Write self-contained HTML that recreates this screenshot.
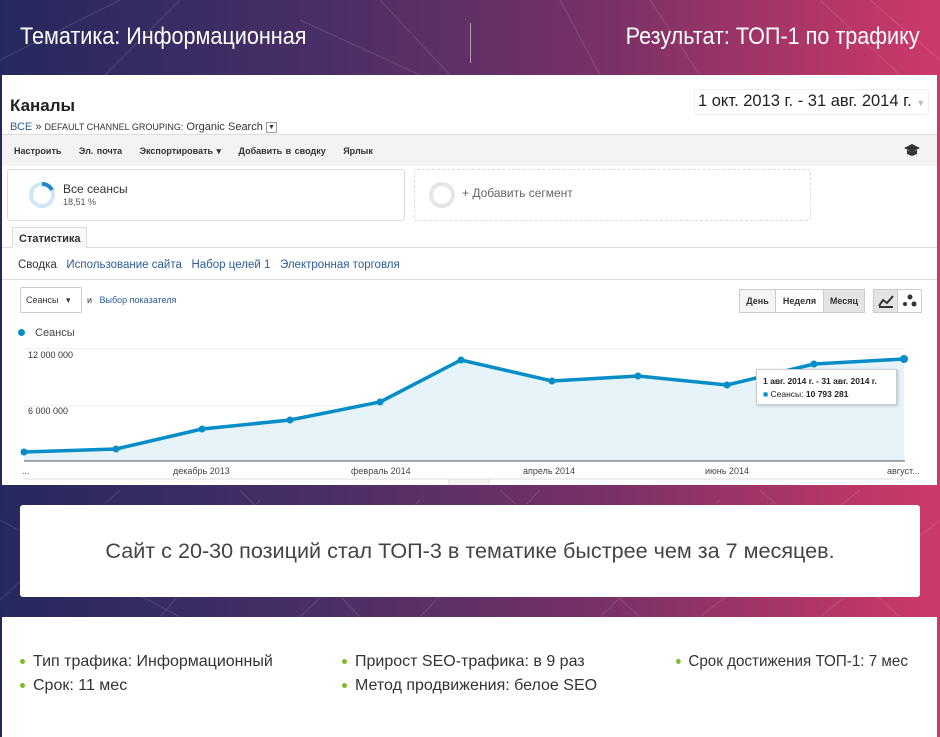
<!DOCTYPE html>
<html><head><meta charset="utf-8"><style>
*{margin:0;padding:0;box-sizing:border-box}
body{width:940px;height:737px;overflow:hidden;position:relative;font-family:"Liberation Sans",Arial,sans-serif;background:linear-gradient(90deg,#25285e 0%,#4a2f66 35%,#7a3166 65%,#b33668 88%,#cc3a6a 100%)}
.abs{position:absolute}
.hdr{color:#fff;font-size:24px;top:23px;transform:scaleX(0.9);white-space:nowrap}
.ss{left:2px;top:75px;width:935px;height:410px;background:#fff;overflow:hidden}
.t{position:absolute;white-space:nowrap}
.blue{color:#2a5d99}
.btn{border:1px solid #ccc;background:#f5f5f5;font-size:9px;font-weight:bold;color:#333;height:24px;line-height:22px;text-align:center}
.li{font-size:16px;color:#333;white-space:nowrap}
.li:before{content:"";display:inline-block;width:5px;height:5px;border-radius:50%;background:#7cb82f;margin-right:8px;vertical-align:middle}
</style></head><body>
<svg class="abs" style="left:0;top:0" width="940" height="737"><g stroke="#ffffff" stroke-opacity="0.13" stroke-width="1" fill="none">
<path d="M0 60 L120 0 M180 0 L60 120 M300 20 L420 75 M650 0 L700 75 M380 0 L450 75 M820 0 L900 75 M870 0 L940 60 M560 0 L600 75 M0 600 L120 490 M160 617 L260 500 M300 617 L420 500 M420 617 L540 490 M600 617 L720 500 M700 617 L860 490 M820 617 L940 520 M0 520 L180 617 M240 490 L360 617 M500 490 L640 617 M760 490 L900 617"/></g></svg>
<div class="abs hdr" style="left:20px;transform-origin:left center">Тематика: Информационная</div>
<div class="abs" style="left:470px;top:23px;width:1px;height:40px;background:rgba(255,255,255,.5)"></div>
<div class="abs hdr" style="right:20px;transform-origin:right center">Результат: ТОП-1 по трафику</div>

<div class="abs ss">
 <div class="t" style="left:8px;top:21px;font-size:17px;font-weight:bold;color:#222">Каналы</div>
 <div class="t" style="left:8px;top:46px;font-size:11px;color:#333"><span class="blue">ВСЕ</span> » <span style="font-size:9px">DEFAULT CHANNEL GROUPING:</span> Organic Search <span style="display:inline-block;width:11px;height:11px;border:1px solid #999;font-size:7px;text-align:center;line-height:9px;vertical-align:middle">▼</span></div>
 <div class="t" style="left:692px;top:14px;width:235px;height:26px;border:1px solid #eee;border-radius:3px;font-size:16.5px;color:#222;padding:2px 3px">1 окт. 2013 г. - 31 авг. 2014 г. <span style="color:#bbb;font-size:9px">▼</span></div>
 <div class="t" style="left:0;top:59px;width:935px;height:32px;background:#f3f3f3;border-top:1px solid #ddd"></div>
 <div class="t" style="left:12px;top:71px;font-size:9px;font-weight:bold;color:#333;word-spacing:1px">Настроить &nbsp;&nbsp;&nbsp; Эл. почта &nbsp;&nbsp;&nbsp; Экспортировать ▾ &nbsp;&nbsp;&nbsp; Добавить в сводку &nbsp;&nbsp;&nbsp; Ярлык</div>
 <svg class="t" style="left:901px;top:69px" width="18" height="12"><path d="M1 4 L9 0 L17 4 L9 8Z M4 6 L4 10 L9 12 L14 10 L14 6 L9 8Z" fill="#333"/></svg>
 <div class="t" style="left:5px;top:94px;width:398px;height:52px;border:1px solid #ddd;border-radius:3px"></div>
 <svg class="t" style="left:26px;top:106px" width="28" height="28"><circle cx="14" cy="14" r="11" fill="none" stroke="#cfe6f4" stroke-width="4"/><path d="M14 3 A11 11 0 0 1 24 9" fill="none" stroke="#1f8ac9" stroke-width="4"/></svg>
 <div class="t" style="left:61px;top:107px;font-size:12px;color:#333">Все сеансы</div>
 <div class="t" style="left:61px;top:122px;font-size:9px;color:#555">18,51 %</div>
 <div class="t" style="left:412px;top:94px;width:397px;height:52px;border:1px dashed #ddd;border-radius:3px"></div>
 <svg class="t" style="left:426px;top:106px" width="28" height="28"><circle cx="14" cy="14" r="11" fill="none" stroke="#e5e5e5" stroke-width="4"/></svg>
 <div class="t" style="left:460px;top:111px;font-size:12px;color:#666">+ Добавить сегмент</div>
 <div class="t" style="left:0;top:172px;width:935px;height:1px;background:#ddd"></div>
 <div class="t" style="left:10px;top:152px;width:75px;height:21px;border:1px solid #ddd;border-bottom:none;background:#f8f8f8;font-size:11px;font-weight:bold;color:#333;padding:5px 0 0 6px">Статистика</div>
 <div class="t" style="left:16px;top:184px;font-size:11.5px;color:#333">Сводка &nbsp;&nbsp;<span class="blue">Использование сайта</span> &nbsp;&nbsp;<span class="blue">Набор целей 1</span> &nbsp;&nbsp;<span class="blue">Электронная торговля</span></div>
 <div class="t" style="left:0;top:204px;width:935px;height:1px;background:#ddd"></div>
 <div class="t" style="left:18px;top:212px;width:62px;height:26px;border:1px solid #ccc;border-radius:2px;font-size:9px;color:#333;padding:7px 5px">Сеансы &nbsp;&nbsp;▾</div>
 <div class="t" style="left:85px;top:220px;font-size:9px;color:#333">и &nbsp;&nbsp;<span class="blue">Выбор показателя</span></div>
 <div class="btn t" style="left:737px;top:214px;width:37px">День</div>
 <div class="btn t" style="left:773px;top:214px;width:49px;background:#fff">Неделя</div>
 <div class="btn t" style="left:821px;top:214px;width:42px;background:#e4e4e4">Месяц</div>
 <div class="btn t" style="left:871px;top:214px;width:25px;background:#e4e4e4"><svg width="16" height="14" style="margin-top:4px"><path d="M1 12 L5 6 L9 9 L15 2 M1 13 L15 13" fill="none" stroke="#333" stroke-width="2"/></svg></div>
 <div class="btn t" style="left:895px;top:214px;width:25px;background:#fff"><svg width="16" height="14" style="margin-top:4px"><circle cx="8" cy="3" r="2.5" fill="#333"/><circle cx="3" cy="10" r="2" fill="#333"/><circle cx="12" cy="10" r="2.5" fill="#333"/></svg></div>
 <div class="t" style="left:16px;top:254px;width:7px;height:7px;border-radius:50%;background:#058dc7"></div>
 <div class="t" style="left:33px;top:252px;font-size:11px;color:#444">Сеансы</div>
 <div class="t" style="left:26px;top:275px;font-size:9px;color:#333">12 000 000</div>
 <div class="t" style="left:26px;top:331px;font-size:9px;color:#333">6 000 000</div>
 <svg class="t" style="left:0;top:0" width="935" height="410">
  <line x1="22" y1="274" x2="903" y2="274" stroke="#eee"/>
  <line x1="22" y1="331" x2="903" y2="331" stroke="#eee"/>
  <path d="M22 377 L114 374 L200 354 L288 345 L378 327 L459 285 L550 306 L636 301 L725 310 L812 289 L902 284 L902 386 L22 386Z" fill="#e6f3f9"/>
  <line x1="22" y1="386" x2="903" y2="386" stroke="#555"/>
  <polyline points="22,377 114,374 200,354 288,345 378,327 459,285 550,306 636,301 725,310 812,289 902,284" fill="none" stroke="#058dc7" stroke-width="3.5"/>
  <g fill="#058dc7"><circle cx="22" cy="377" r="3.5"/><circle cx="114" cy="374" r="3.5"/><circle cx="200" cy="354" r="3.5"/><circle cx="288" cy="345" r="3.5"/><circle cx="378" cy="327" r="3.5"/><circle cx="459" cy="285" r="3.5"/><circle cx="550" cy="306" r="3.5"/><circle cx="636" cy="301" r="3.5"/><circle cx="725" cy="310" r="3.5"/><circle cx="812" cy="289" r="3.5"/><circle cx="902" cy="284" r="4"/></g>
  <line x1="22" y1="404" x2="903" y2="404" stroke="#ddd"/>
  <rect x="447" y="404" width="40" height="8" fill="#f3f3f3" stroke="#ddd"/>
 </svg>
 <div class="t" style="left:754px;top:294px;width:141px;height:36px;background:#fff;border:1px solid #ccc;box-shadow:1px 1px 3px rgba(0,0,0,.2);font-size:8.5px;color:#222;padding:5px 6px;line-height:13px"><b>1 авг. 2014 г. - 31 авг. 2014 г.</b><br><span style="color:#058dc7">■</span> Сеансы: <b>10 793 281</b></div>
 <div class="t" style="left:20px;top:391px;font-size:9px;color:#444">...</div>
 <div class="t" style="left:171px;top:391px;font-size:9px;color:#444">декабрь 2013</div>
 <div class="t" style="left:349px;top:391px;font-size:9px;color:#444">февраль 2014</div>
 <div class="t" style="left:521px;top:391px;font-size:9px;color:#444">апрель 2014</div>
 <div class="t" style="left:703px;top:391px;font-size:9px;color:#444">июнь 2014</div>
 <div class="t" style="left:885px;top:391px;font-size:9px;color:#444">август...</div>
</div>

<div class="abs" style="left:20px;top:505px;width:900px;height:92px;background:#fff;border-radius:3px;text-align:center;font-size:21.6px;color:#444;line-height:92px;white-space:nowrap">Сайт с 20-30 позиций стал ТОП-3 в тематике быстрее чем за 7 месяцев.</div>

<div class="abs" style="left:2px;top:617px;width:935px;height:120px;background:#fff"></div>
<div class="abs li" style="left:20px;top:653px">Тип трафика: Информационный</div>
<div class="abs li" style="left:20px;top:677px">Срок: 11 мес</div>
<div class="abs li" style="left:342px;top:653px">Прирост SEO-трафика: в 9 раз</div>
<div class="abs li" style="left:342px;top:677px">Метод продвижения: белое SEO</div>
<div class="abs li" style="left:676px;top:653px;transform:scaleX(0.95);transform-origin:left">Срок достижения ТОП-1: 7 мес</div>
</body></html>
